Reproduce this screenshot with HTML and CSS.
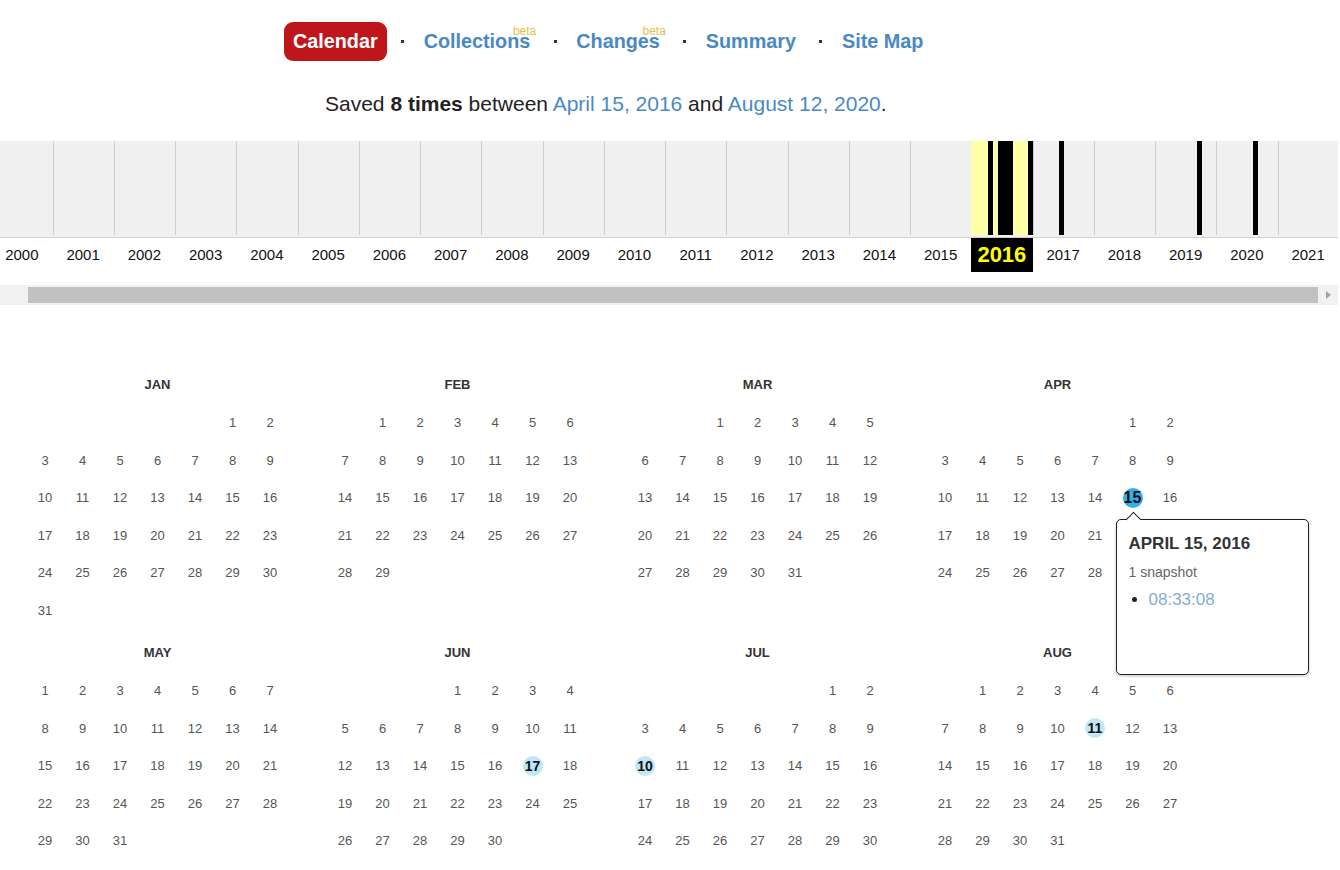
FILE: index.html
```html
<!DOCTYPE html>
<html lang="en">
<head>
<meta charset="utf-8">
<title>Wayback Machine – Calendar</title>
<link rel="stylesheet" href="styles.css">
</head>
<body>
<nav class="nav">
  <span class="pill">Calendar</span>
  <span class="sep first"></span>
  <a href="#">Collections<span class="beta">beta</span></a>
  <span class="sep"></span>
  <a href="#">Changes<span class="beta">beta</span></a>
  <span class="sep"></span>
  <a href="#">Summary</a>
  <span class="sep"></span>
  <a href="#">Site Map</a>
</nav>

<p class="saved">Saved <strong>8 times</strong> between <a href="#">April 15, 2016</a> and <a href="#">August 12, 2020</a>.</p>

<div class="timeline">
  <div class="track">
    <div class="cols">
      <div class="yr"></div><div class="yr"></div><div class="yr"></div><div class="yr"></div>
      <div class="yr"></div><div class="yr"></div><div class="yr"></div><div class="yr"></div>
      <div class="yr"></div><div class="yr"></div><div class="yr"></div><div class="yr"></div>
      <div class="yr"></div><div class="yr"></div><div class="yr"></div><div class="yr"></div>
      <div class="yr cur">
        <i class="bar" style="left:15.3px;width:5.1px"></i>
        <i class="bar" style="left:25.5px;width:15.3px"></i>
        <i class="bar" style="left:55.9px;width:5.3px"></i>
      </div>
      <div class="yr"><i class="bar" style="left:25.5px;width:5.1px"></i></div>
      <div class="yr"></div>
      <div class="yr"><i class="bar" style="left:40.8px;width:5.1px"></i></div>
      <div class="yr"><i class="bar" style="left:35.7px;width:5.1px"></i></div>
      <div class="yr"></div>
    </div>
  </div>
  <div class="labels">
    <div class="cols">
      <span class="lbl">2000</span><span class="lbl">2001</span><span class="lbl">2002</span><span class="lbl">2003</span>
      <span class="lbl">2004</span><span class="lbl">2005</span><span class="lbl">2006</span><span class="lbl">2007</span>
      <span class="lbl">2008</span><span class="lbl">2009</span><span class="lbl">2010</span><span class="lbl">2011</span>
      <span class="lbl">2012</span><span class="lbl">2013</span><span class="lbl">2014</span><span class="lbl">2015</span>
      <span class="lbl cur">2016</span><span class="lbl">2017</span><span class="lbl">2018</span><span class="lbl">2019</span>
      <span class="lbl">2020</span><span class="lbl">2021</span>
    </div>
  </div>
  <div class="sbar">
    <span class="thumb"></span>
    <span class="arrow"></span>
  </div>
</div>

<div class="cal">
  <div class="month">
    <div class="mtitle">JAN</div>
    <div class="days">
      <span class="s6">1</span><span>2</span><span>3</span><span>4</span><span>5</span><span>6</span><span>7</span><span>8</span><span>9</span><span>10</span><span>11</span><span>12</span><span>13</span><span>14</span><span>15</span><span>16</span><span>17</span><span>18</span><span>19</span><span>20</span><span>21</span><span>22</span><span>23</span><span>24</span><span>25</span><span>26</span><span>27</span><span>28</span><span>29</span><span>30</span><span>31</span>
    </div>
  </div>
  <div class="month">
    <div class="mtitle">FEB</div>
    <div class="days">
      <span class="s2">1</span><span>2</span><span>3</span><span>4</span><span>5</span><span>6</span><span>7</span><span>8</span><span>9</span><span>10</span><span>11</span><span>12</span><span>13</span><span>14</span><span>15</span><span>16</span><span>17</span><span>18</span><span>19</span><span>20</span><span>21</span><span>22</span><span>23</span><span>24</span><span>25</span><span>26</span><span>27</span><span>28</span><span>29</span>
    </div>
  </div>
  <div class="month">
    <div class="mtitle">MAR</div>
    <div class="days">
      <span class="s3">1</span><span>2</span><span>3</span><span>4</span><span>5</span><span>6</span><span>7</span><span>8</span><span>9</span><span>10</span><span>11</span><span>12</span><span>13</span><span>14</span><span>15</span><span>16</span><span>17</span><span>18</span><span>19</span><span>20</span><span>21</span><span>22</span><span>23</span><span>24</span><span>25</span><span>26</span><span>27</span><span>28</span><span>29</span><span>30</span><span>31</span>
    </div>
  </div>
  <div class="month">
    <div class="mtitle">APR</div>
    <div class="days">
      <span class="s6">1</span><span>2</span><span>3</span><span>4</span><span>5</span><span>6</span><span>7</span><span>8</span><span>9</span><span>10</span><span>11</span><span>12</span><span>13</span><span>14</span><span class="sel"><b>15</b>
        <div class="tip">
          <div class="tip-title">APRIL 15, 2016</div>
          <div class="tip-count">1 snapshot</div>
          <ul class="tip-list"><li><a href="#">08:33:08</a></li></ul>
        </div>
      </span><span>16</span><span>17</span><span>18</span><span>19</span><span>20</span><span>21</span><span>22</span><span>23</span><span>24</span><span>25</span><span>26</span><span>27</span><span>28</span><span>29</span><span>30</span>
    </div>
  </div>
  <div class="month">
    <div class="mtitle">MAY</div>
    <div class="days">
      <span class="s1">1</span><span>2</span><span>3</span><span>4</span><span>5</span><span>6</span><span>7</span><span>8</span><span>9</span><span>10</span><span>11</span><span>12</span><span>13</span><span>14</span><span>15</span><span>16</span><span>17</span><span>18</span><span>19</span><span>20</span><span>21</span><span>22</span><span>23</span><span>24</span><span>25</span><span>26</span><span>27</span><span>28</span><span>29</span><span>30</span><span>31</span>
    </div>
  </div>
  <div class="month">
    <div class="mtitle">JUN</div>
    <div class="days">
      <span class="s4">1</span><span>2</span><span>3</span><span>4</span><span>5</span><span>6</span><span>7</span><span>8</span><span>9</span><span>10</span><span>11</span><span>12</span><span>13</span><span>14</span><span>15</span><span>16</span><span class="hl"><b>17</b></span><span>18</span><span>19</span><span>20</span><span>21</span><span>22</span><span>23</span><span>24</span><span>25</span><span>26</span><span>27</span><span>28</span><span>29</span><span>30</span>
    </div>
  </div>
  <div class="month">
    <div class="mtitle">JUL</div>
    <div class="days">
      <span class="s6">1</span><span>2</span><span>3</span><span>4</span><span>5</span><span>6</span><span>7</span><span>8</span><span>9</span><span class="hl"><b>10</b></span><span>11</span><span>12</span><span>13</span><span>14</span><span>15</span><span>16</span><span>17</span><span>18</span><span>19</span><span>20</span><span>21</span><span>22</span><span>23</span><span>24</span><span>25</span><span>26</span><span>27</span><span>28</span><span>29</span><span>30</span><span>31</span>
    </div>
  </div>
  <div class="month">
    <div class="mtitle">AUG</div>
    <div class="days">
      <span class="s2">1</span><span>2</span><span>3</span><span>4</span><span>5</span><span>6</span><span>7</span><span>8</span><span>9</span><span>10</span><span class="hl"><b>11</b></span><span>12</span><span>13</span><span>14</span><span>15</span><span>16</span><span>17</span><span>18</span><span>19</span><span>20</span><span>21</span><span>22</span><span>23</span><span>24</span><span>25</span><span>26</span><span>27</span><span>28</span><span>29</span><span>30</span><span>31</span>
    </div>
  </div>
</div>
</body>
</html>
```

FILE: styles.css
```css
html, body {
  margin: 0;
  padding: 0;
  background: #fff;
  overflow: hidden;
}
body {
  font-family: "Liberation Sans", Arial, sans-serif;
  color: #222;
  width: 1340px;
  height: 870px;
}

/* ---------- top nav ---------- */
.nav {
  display: flex;
  align-items: center;
  height: 39px;
  padding: 22px 0 0 284px;
}
.pill {
  background: #bf161c;
  color: #fff;
  font-weight: bold;
  font-size: 19.8px;
  line-height: 39px;
  padding: 0 9px;
  border-radius: 9px;
}
.nav a {
  position: relative;
  color: #4a88c5;
  font-weight: bold;
  font-size: 19.8px;
  line-height: 39px;
  text-decoration: none;
}
.sep {
  width: 3px;
  height: 3px;
  background: #333;
  margin: 0 19.5px 0 23.5px;
}
.sep.first {
  margin-left: 14.5px;
}
.beta {
  position: absolute;
  right: -6px;
  top: 2px;
  font-size: 12px;
  line-height: 14px;
  font-weight: normal;
  color: #e4c14e;
}

/* ---------- saved line ---------- */
.saved {
  margin: 31px 0 0 0;
  padding-left: 325px;
  font-size: 21px;
  line-height: 24px;
  color: #222;
}
.saved a {
  color: #4b89c6;
  text-decoration: none;
}

/* ---------- timeline ---------- */
.timeline {
  margin-top: 25px;
  width: 1338px;
}
.track {
  height: 96px;
  background: #f0f0f0;
  border-bottom: 1px solid #cfcfcf;
  overflow: hidden;
}
.cols {
  display: flex;
  margin-left: -8.75px;
}
.yr {
  flex: 0 0 61.25px;
  height: 94px;
  box-sizing: border-box;
  border-left: 1px solid #cdcdcd;
  position: relative;
}
.yr.cur {
  background: #ffffa5;
  border-left-color: #ffffa5;
}
.bar {
  position: absolute;
  top: 0;
  bottom: 0;
  background: #000;
}
.labels {
  height: 34px;
  overflow: hidden;
}
.lbl {
  flex: 0 0 61.25px;
  text-align: center;
  font-size: 15px;
  line-height: 34px;
  color: #111;
}
.lbl.cur {
  background: #000;
  color: #ffff00;
  font-weight: bold;
  font-size: 22px;
}
.sbar {
  margin-top: 13px;
  height: 20px;
  background: #f1f1f1;
  display: flex;
  align-items: center;
  padding-left: 28px;
}
.thumb {
  width: 1290px;
  height: 16px;
  background: #c1c1c1;
}
.arrow {
  flex: 1;
  display: flex;
  justify-content: center;
  align-items: center;
}
.arrow::before {
  content: "";
  border-left: 5px solid #a3a3a3;
  border-top: 4px solid transparent;
  border-bottom: 4px solid transparent;
}

/* ---------- calendar ---------- */
.cal {
  margin-top: 61px;
  padding-left: 26.25px;
  display: grid;
  grid-template-columns: repeat(4, 300px);
  row-gap: 5px;
  align-items: start;
}
.mtitle {
  width: 262.5px;
  height: 38px;
  line-height: 38px;
  text-align: center;
  font-weight: bold;
  font-size: 13px;
  color: #333;
}
.days {
  display: grid;
  grid-template-columns: repeat(7, 37.5px);
  grid-auto-rows: 37.5px;
}
.days > span {
  display: flex;
  align-items: center;
  justify-content: center;
  font-size: 13px;
  color: #555;
}
.days .s1 { grid-column-start: 1; }
.days .s2 { grid-column-start: 2; }
.days .s3 { grid-column-start: 3; }
.days .s4 { grid-column-start: 4; }
.days .s6 { grid-column-start: 6; }

.days b {
  width: 20px;
  height: 20px;
  border-radius: 50%;
  display: flex;
  align-items: center;
  justify-content: center;
  background: #c0e6f7;
  color: #111;
  font-weight: bold;
  font-size: 14px;
}
.days .sel {
  position: relative;
}
.days .sel b {
  background: #36aee6;
  font-size: 16px;
}

/* ---------- tooltip ---------- */
.tip {
  position: absolute;
  left: 1.75px;
  top: 39.75px;
  z-index: 5;
  width: 193px;
  height: 156px;
  box-sizing: border-box;
  padding: 14px 12px 0 12px;
  background: #fff;
  border: 1px solid #222;
  border-radius: 5px;
  box-shadow: 0 1px 3px rgba(0, 0, 0, 0.25);
  text-align: left;
}
.tip::before {
  content: "";
  position: absolute;
  top: -6px;
  left: 11px;
  width: 10px;
  height: 10px;
  background: #fff;
  border-left: 1px solid #222;
  border-top: 1px solid #222;
  transform: rotate(45deg);
}
.tip-title {
  font-weight: bold;
  font-size: 17px;
  line-height: 20px;
  color: #333;
}
.tip-count {
  margin-top: 9px;
  font-size: 14px;
  line-height: 18px;
  color: #666;
}
.tip-list {
  margin: 9px 0 0 0;
  padding-left: 20px;
  color: #222;
}
.tip-list li {
  font-size: 17px;
  line-height: 20px;
}
.tip-list a {
  color: #86add2;
  text-decoration: none;
}
```
